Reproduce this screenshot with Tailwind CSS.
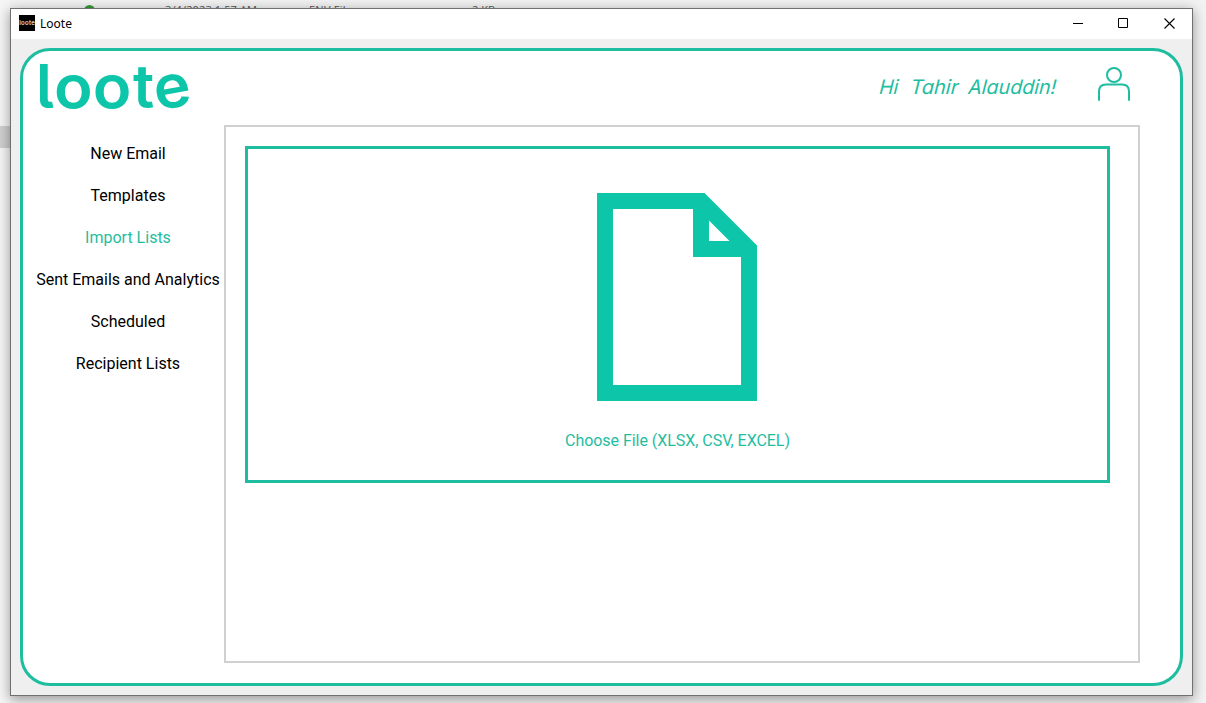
<!DOCTYPE html>
<html lang="en">
<head>
<meta charset="utf-8">
<title>Loote</title>
<script src="https://cdn.jsdelivr.net/npm/@tailwindcss/browser@4"></script>
</head>
<body class="relative h-[703px] w-[1206px] overflow-hidden bg-[#f2f2f2] font-['Roboto',sans-serif]">
  <!-- file list behind the window -->
  <div class="absolute left-0 top-0 h-[703px] w-2.5 bg-[#f5f5f5]"></div>
  <div class="absolute left-0 top-[126px] h-[22px] w-2.5 bg-[#cfcfcf]"></div>
  <div class="absolute left-[84px] top-[5px] size-[11px] rounded-full bg-[#339a33]"></div>
  <div class="absolute left-[165px] top-[3px] whitespace-nowrap font-['Open_Sans',sans-serif] text-[11px] leading-[15px] text-[#555]">
    <svg class="block" width="340" height="15" fill="#555"><text x="0" y="11" textLength="92">3/4/2023 1:57 AM</text><text x="144" y="11" textLength="43">ENV File</text><text x="307" y="11" textLength="23">2 KB</text></svg>
  </div>

  <!-- application window -->
  <main class="absolute left-2.5 top-2 flex h-[688px] w-[1183px] flex-col border border-[#707070] bg-[#efefef] shadow-[0_3px_12px_rgba(0,0,0,0.4)]">
    <header class="flex h-[30px] shrink-0 items-center bg-white pl-2">
      <svg class="mb-0.5 shrink-0" width="16" height="16"><rect width="16" height="16" fill="#000"/><text x="0.3" y="10" fill="#fff" font-family="Inter" font-size="6" font-weight="500" textLength="15.4">loote</text></svg>
      <span class="ml-[5px] font-['Noto_Sans',sans-serif] text-xs text-black">Loote</span>
      <div class="-mr-px ml-auto flex">
        <svg width="46" height="30" fill="none" stroke="#000"><path d="M18 14.500h10"/></svg>
        <svg width="46" height="30" fill="none" stroke="#000"><path d="M17.500 9.500h9v9h-9z"/></svg>
        <svg width="46" height="30" fill="none" stroke="#000" stroke-width="1.1"><path d="M17.500 9.500l10 10M27.500 9.500l-10 10"/></svg>
      </div>
    </header>

    <section class="ml-[9px] mt-[9px] flex h-[638px] w-[1163px] flex-col rounded-[30px] border-3 border-[#1fbda0] bg-white">
      <div class="flex h-[74px] shrink-0 items-start">
        <svg class="shrink-0 overflow-visible" width="190" height="74" fill="#0dc5a8" font-family="Inter" font-size="60" font-weight="600" style="font-feature-settings:'cv05'">
          <text transform="translate(13 56.500)">l</text>
          <text transform="translate(31 56.500) scale(1.06 1)">o</text>
          <text transform="translate(69.800 56.500) scale(1.06 1)">o</text>
          <text transform="translate(110 56.500)">t</text>
          <text transform="translate(134 59.500) rotate(-10) scale(1.04 1)">e</text>
        </svg>
        <svg class="ml-auto mr-[36px] overflow-visible" width="190" height="74" fill="#1fbda0" font-family="Inter" font-size="20" style="font-feature-settings:'cv11'">
          <g transform="translate(4 43) skewX(-14)">
            <text x="3" y="0" textLength="19" lengthAdjust="spacingAndGlyphs">Hi</text>
            <text x="34" y="0" textLength="48" lengthAdjust="spacingAndGlyphs">Tahir</text>
            <text x="92" y="0" textLength="88" lengthAdjust="spacingAndGlyphs">Alauddin!</text>
          </g>
        </svg>
        <svg class="mr-[49px] mt-[15px]" width="34" height="36" fill="none" stroke="#1fbda0" stroke-width="2" stroke-linecap="round"><circle cx="17" cy="9" r="7"/><path d="M2 34v-8.500q0-7 7-7h16q7 0 7 7V34"/></svg>
      </div>
      <div class="flex">
        <nav class="flex w-[201px] flex-col gap-[18px] pl-[9px] pt-[17px] text-center text-base text-black">
          <a class="whitespace-nowrap">New Email</a>
          <a class="whitespace-nowrap">Templates</a>
          <a class="whitespace-nowrap text-[#1fbda0]">Import Lists</a>
          <a class="whitespace-nowrap">Sent Emails and Analytics</a>
          <a class="whitespace-nowrap">Scheduled</a>
          <a class="whitespace-nowrap">Recipient Lists</a>
        </nav>
        <div class="h-[538px] w-[916px] border-2 border-[#d0d0d0] pl-[19px] pt-[19px]">
          <div class="flex h-[337px] w-[865px] flex-col items-center border-3 border-[#1fbda0] pt-11">
            <svg class="mr-px shrink-0" width="160" height="208" fill="#0dc5a8" fill-rule="evenodd"><path d="M0 0H107.500L160 52.500V208H0zM16 16V192H144V64H96V16zM112 27.500V48H132.500z"/></svg>
            <span class="mt-7 text-base tracking-[-0.04px] text-[#1fbda0]">Choose File (XLSX, CSV, EXCEL)</span>
          </div>
        </div>
      </div>
    </section>
  </main>
</body>
</html>
